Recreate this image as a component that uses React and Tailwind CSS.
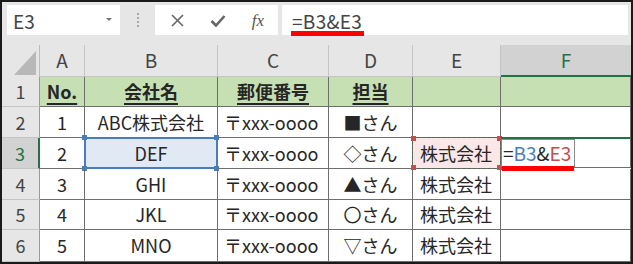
import React from "react";

const FONT = { fontFamily: '"Noto Sans CJK JP", "Noto Sans", sans-serif' };

const COLS = ["A", "B", "C", "D", "E", "F"];

// body rows: [no, company, zip, owner, E]
const ROWS = [
  ["1", "ABC株式会社", "〒xxx-oooo", "■さん", ""],
  ["2", "DEF", "〒xxx-oooo", "◇さん", "株式会社"],
  ["3", "GHI", "〒xxx-oooo", "▲さん", "株式会社"],
  ["4", "JKL", "〒xxx-oooo", "〇さん", "株式会社"],
  ["5", "MNO", "〒xxx-oooo", "▽さん", "株式会社"],
];

const ROW_H = ["h-[30px]", "h-[31px]", "h-[31px]", "h-[31px]", "h-[30px]", "h-[32px]"];

function Handle({ className }) {
  return <span className={`absolute w-[5px] h-[5px] ${className}`} />;
}

function Toolbar() {
  return (
    <div className="h-[43px] bg-[#e6e6e6] flex items-start pt-[3px] pl-[5px] pr-[3px]">
      {/* name box */}
      <div className="w-[113px] h-[30px] bg-white flex items-center justify-between pl-[6px] pr-[8px]">
        <span className="text-[19px] text-[#444] leading-none">E3</span>
        <span className="w-0 h-0 border-l-[3px] border-r-[3px] border-t-[3px] border-l-transparent border-r-transparent border-t-[#777] mb-[2px]" />
      </div>
      <div className="w-[35px] h-[30px] flex flex-col items-center justify-center gap-[2px]">
        <span className="w-[2px] h-[2px] bg-[#aaa]" />
        <span className="w-[2px] h-[2px] bg-[#aaa]" />
        <span className="w-[2px] h-[2px] bg-[#aaa]" />
        <span className="w-[2px] h-[2px] bg-[#aaa]" />
      </div>
      {/* cancel / enter / fx */}
      <div className="w-[123px] h-[30px] bg-white flex items-center">
        <div className="w-[40px] flex justify-center pl-[4px]">
          <svg width="13" height="13" viewBox="0 0 13 13">
            <path d="M1 1L12 12M12 1L1 12" stroke="#666" strokeWidth="1.6" />
          </svg>
        </div>
        <div className="w-[40px] flex justify-center pl-[6px]">
          <svg width="16" height="13" viewBox="0 0 16 13">
            <path d="M1.5 7L6 11.5L14.5 2" stroke="#666" strokeWidth="2.6" fill="none" />
          </svg>
        </div>
        <div className="w-[40px] flex justify-center pl-[6px]">
          <span className="text-[17px] italic text-[#555] leading-none" style={{ fontFamily: '"Liberation Serif", serif' }}>
            fx
          </span>
        </div>
      </div>
      {/* formula bar */}
      <div className="ml-[4px] flex-1 h-[30px] bg-white flex items-center pl-[10px]">
        <span className="relative text-[19px] text-[#444] leading-none tracking-[0.3px]">
          =B3&amp;E3
          <span className="absolute left-[-1px] right-[-2px] top-[20px] h-[5px] bg-[#ff0000]" />
        </span>
      </div>
    </div>
  );
}

function HeaderRow() {
  return (
    <>
      <div className="h-[32px] bg-[#e6e6e6] border-r border-[#bdbdbd] flex items-end justify-end pr-[3px] pb-[2px]">
        <svg width="22" height="24" viewBox="0 0 22 24">
          <path d="M22 0V24H0Z" fill="#b8b8b8" />
        </svg>
      </div>
      {COLS.map((c) => (
        <div
          key={c}
          className={
            c === "F"
              ? "h-[32px] bg-[#d2d2d2] text-[#217346] border-b-2 border-[#217346] flex items-center justify-center text-[19px]"
              : "h-[32px] bg-[#e6e6e6] text-[#444] border-r border-b border-[#c4c4c4] flex items-center justify-center text-[19px]"
          }
        >
          {c}
        </div>
      ))}
    </>
  );
}

function RowHeader({ n, h }) {
  const active = n === 3;
  return (
    <div
      className={`${h} flex items-center justify-center text-[18px] border-b border-[#c4c4c4] ${
        active ? "bg-[#d2d2d2] text-[#217346] border-r-2 border-r-[#217346]" : "bg-[#e6e6e6] text-[#444] border-r border-r-[#9a9a9a]"
      }`}
    >
      {n}
    </div>
  );
}

function Cell({ h, children, className = "" }) {
  return (
    <div className={`${h} relative flex items-center justify-center text-[18px] text-[#262626] border-r border-b border-[#6e6e6e] ${className}`}>
      {children}
    </div>
  );
}

export default function App() {
  return (
    <div className="w-[633px] h-[264px] border-2 border-[#1a1a1a] bg-white overflow-hidden" style={FONT}>
      <Toolbar />
      <div className="grid grid-cols-[38px_45px_133px_111px_84px_88px_130px]">
        <HeaderRow />

        {/* row 1 - titles */}
        <RowHeader n={1} h={ROW_H[0]} />
        {["No.", "会社名", "郵便番号", "担当", "", ""].map((t, i) => (
          <Cell key={i} h={ROW_H[0]} className="bg-[#c6e0b4] font-bold underline underline-offset-[4px] decoration-[1.5px]">
            {t}
          </Cell>
        ))}

        {ROWS.map((r, idx) => {
          const n = idx + 2;
          const h = ROW_H[idx + 1];
          return (
            <React.Fragment key={n}>
              <RowHeader n={n} h={h} />
              <Cell h={h}>{r[0]}</Cell>
              {n === 3 ? (
                <Cell h={h} className="bg-[#e1e9f5]">
                  <span className="absolute inset-[-1px] border-2 border-[#4a7ebb]" />
                  <Handle className="bg-[#4a7ebb] left-[-3px] top-[-3px]" />
                  <Handle className="bg-[#4a7ebb] right-[-2px] top-[-3px]" />
                  <Handle className="bg-[#4a7ebb] left-[-3px] bottom-[-3px]" />
                  <Handle className="bg-[#4a7ebb] right-[-2px] bottom-[-3px]" />
                  <span className="relative">{r[1]}</span>
                </Cell>
              ) : (
                <Cell h={h}>{r[1]}</Cell>
              )}
              <Cell h={h} className="justify-start pl-[6px]">{r[2]}</Cell>
              <Cell h={h}>{r[3]}</Cell>
              {n === 3 ? (
                <Cell h={h} className="bg-[#fbe7e7] justify-start pl-[7px]">
                  <span className="absolute inset-[-1px] border-[1.5px] border-dashed border-[#4f6b4f]" />
                  <Handle className="bg-[#c0504d] left-[-2px] top-[-2px]" />
                  <Handle className="bg-[#c0504d] right-[-2px] top-[-2px]" />
                  <Handle className="bg-[#c0504d] left-[-2px] bottom-[-2px]" />
                  <Handle className="bg-[#c0504d] right-[-2px] bottom-[-2px]" />
                  <span className="relative">{r[4]}</span>
                </Cell>
              ) : (
                <Cell h={h} className="justify-start pl-[7px]">{r[4]}</Cell>
              )}
              {n === 3 ? (
                <Cell h={h} className="justify-start border-t-2 border-t-[#217346] mt-[-1px]">
                  <span className="relative h-full flex items-center pl-[1px] pr-[3px] border border-[#8a8a8a] bg-white text-[19px]">
                    <span className="text-[#262626]">=</span>
                    <span className="text-[#4a7ebb]">B3</span>
                    <span className="text-[#262626]">&amp;</span>
                    <span className="text-[#c0504d]">E3</span>
                    <span className="absolute left-0 right-0 bottom-[-5px] h-[5px] bg-[#ff0000]" />
                  </span>
                </Cell>
              ) : (
                <Cell h={h} />
              )}
            </React.Fragment>
          );
        })}
      </div>
    </div>
  );
}
